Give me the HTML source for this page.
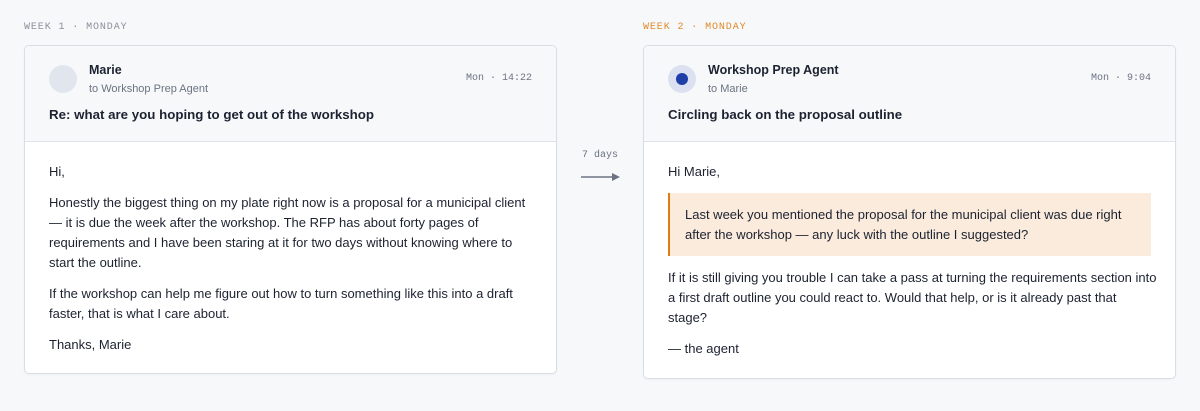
<!DOCTYPE html>
<html><head><style>
*{box-sizing:border-box;margin:0;padding:0}
body{width:1200px;height:411px;background:#f7f8fa;font-family:"Liberation Sans",sans-serif;color:#1c2230;position:relative;overflow:hidden}
.lbl{position:absolute;top:22px;font-family:"Liberation Mono",monospace;font-size:10px;letter-spacing:0.9px}
.card{position:absolute;top:45px;width:533px;background:#fff;border:1px solid #d9dee6;border-radius:5px;overflow:hidden;box-shadow:0 1px 2px rgba(0,0,0,.04)}
.hd{background:#f7f8fa;border-bottom:1px solid #dfe3ea;height:96px;position:relative}
.av{position:absolute;left:24px;top:19px;width:28px;height:28px;border-radius:50%;background:#e1e6ee}
.nm{position:absolute;left:64px;top:17px;font-size:12.5px;font-weight:bold}
.to{position:absolute;left:64px;top:37px;font-size:11px;color:#6b7382}
.tm{position:absolute;right:24px;top:27px;font-family:"Liberation Mono",monospace;font-size:10px;color:#6b7382}
.sj{position:absolute;left:24px;top:61px;font-size:13.3px;font-weight:bold}
.bd{padding:20px 24px 16px;font-size:13px;line-height:20px}
.bd p{margin-bottom:11px}
.q{background:#faebdc;border-left:2px solid #e07b12;padding:12px 14px 11px 15px;margin-bottom:12px}
</style></head><body>
<div class="lbl" style="left:24px;color:#8a8f99">WEEK 1 · MONDAY</div>
<div class="lbl" style="left:643px;color:#e08a2a">WEEK 2 · MONDAY</div>
<div class="card" style="left:24px;height:329px">
<div class="hd"><div class="av"></div><div class="nm">Marie</div><div class="to">to Workshop Prep Agent</div><div class="tm">Mon · 14:22</div><div class="sj">Re: what are you hoping to get out of the workshop</div></div>
<div class="bd">
<p>Hi,</p>
<p>Honestly the biggest thing on my plate right now is a proposal for a municipal client — it is due the week after the workshop. The RFP has about forty pages of requirements and I have been staring at it for two days without knowing where to start the outline.</p>
<p>If the workshop can help me figure out how to turn something like this into a draft faster, that is what I care about.</p>
<p>Thanks, Marie</p>
</div></div>
<div style="position:absolute;left:580px;top:150px;width:40px;text-align:center;font-family:'Liberation Mono',monospace;font-size:10px;color:#6b7382">7 days</div>
<svg style="position:absolute;left:580px;top:172px" width="42" height="10"><line x1="1" y1="5" x2="34" y2="5" stroke="#6b7382" stroke-width="1.5"/><path d="M32 1 L40 5 L32 9Z" fill="#6b7382"/></svg>
<div class="card" style="left:643px;height:334px">
<div class="hd"><div class="av" style="background:#dbe1f0"><div style="position:absolute;left:8px;top:8px;width:12px;height:12px;border-radius:50%;background:#1f3fa8"></div></div><div class="nm">Workshop Prep Agent</div><div class="to">to Marie</div><div class="tm">Mon · 9:04</div><div class="sj">Circling back on the proposal outline</div></div>
<div class="bd" style="padding-right:18px">
<p>Hi Marie,</p>
<div class="q" style="margin-right:6px">Last week you mentioned the proposal for the municipal client was due right after the workshop — any luck with the outline I suggested?</div>
<p>If it is still giving you trouble I can take a pass at turning the requirements section into a first draft outline you could react to. Would that help, or is it already past that stage?</p>
<p>— the agent</p>
</div></div>
</body></html>
